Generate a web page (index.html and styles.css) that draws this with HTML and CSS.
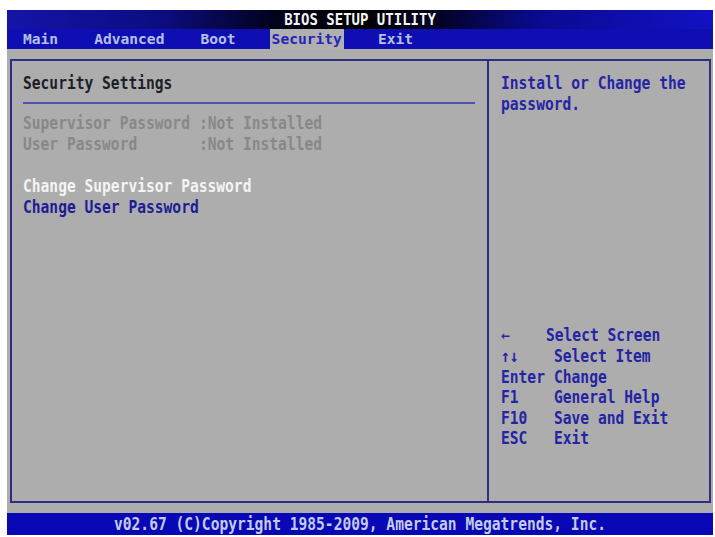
FILE: index.html
```html
<!DOCTYPE html>
<html>
<head>
<meta charset="utf-8">
<link rel="stylesheet" href="styles.css">
</head>
<body>
<div class="screen">
  <div class="titlebar"><div class="tall">BIOS SETUP UTILITY</div></div>
  <div class="menubar">
    <span class="tab">Main</span>
    <span class="tab">Advanced</span>
    <span class="tab">Boot</span>
    <span class="tab active">Security</span>
    <span class="tab">Exit</span>
  </div>
  <div class="body">
    <div class="frame">
      <div class="left">
        <div class="heading tall">Security Settings</div>
        <div class="rule"></div>
        <div class="row disabled tall"><span class="label">Supervisor Password</span><span>:Not Installed</span></div>
        <div class="row disabled tall"><span class="label">User Password</span><span>:Not Installed</span></div>
        <div class="row blank"></div>
        <div class="row selected tall">Change Supervisor Password</div>
        <div class="row item tall">Change User Password</div>
      </div>
      <div class="right">
        <div class="help tall">Install or Change the</div>
        <div class="help tall">password.</div>
        <div class="keys">
          <div class="key tall"><span class="k k1">&larr;</span><span>Select Screen</span></div>
          <div class="key tall"><span class="k">&uarr;&darr;</span><span>Select Item</span></div>
          <div class="key tall"><span class="k">Enter</span><span>Change</span></div>
          <div class="key tall"><span class="k">F1</span><span>General Help</span></div>
          <div class="key tall"><span class="k">F10</span><span>Save and Exit</span></div>
          <div class="key tall"><span class="k">ESC</span><span>Exit</span></div>
        </div>
      </div>
    </div>
  </div>
  <div class="footer"><div class="tall">v02.67 (C)Copyright 1985-2009, American Megatrends, Inc.</div></div>
</div>
</body>
</html>
```

FILE: styles.css
```css
html, body {
  margin: 0;
  padding: 0;
  background: #ffffff;
}
body {
  font-family: "DejaVu Sans Mono", "Liberation Mono", monospace;
  font-weight: bold;
  font-size: 14.6px;
}
.tall {
  transform: scaleY(1.18);
  transform-origin: 50% 55%;
}
.screen {
  margin: 10px 2px 0 7px;
  width: 706px;
  height: 525px;
  display: flex;
  flex-direction: column;
}
.titlebar {
  height: 19px;
  line-height: 19px;
  text-align: center;
  color: #f4f4f4;
  font-size: 14px;
  background: linear-gradient(to right, #1414a8 0%, #0c0c80 22%, #02021c 38%, #000 50%, #03032a 62%, #0a0a90 75%, #1212c4 100%);
}
.menubar {
  height: 20px;
  background: #0e0eb2;
  display: flex;
  gap: 32px;
  padding-left: 14px;
}
.tab {
  display: inline-block;
  padding: 0 2px;
  line-height: 20px;
  color: #b4c0e4;
}
.tab.active {
  background: #b0b0b0;
  color: #2424b8;
}
.body {
  flex: 1;
  background: #adadad;
  padding: 10px 2px 10px 3px;
  display: flex;
}
.frame {
  flex: 1;
  display: flex;
  border: 2px solid #2e2e80;
}
.left {
  width: 477px;
  border-right: 2px solid #2e2e80;
  padding: 11px 0 0 11px;
  box-sizing: border-box;
  line-height: 21px;
}
.heading {
  color: #1e1e2a;
}
.rule {
  height: 2px;
  width: 452px;
  background: #5050b0;
  margin: 9px 0 8px;
}
.row {
  height: 21px;
  white-space: nowrap;
}
.label {
  display: inline-block;
  width: 176px;
}
.disabled {
  color: #888888;
}
.selected {
  color: #f4f4f4;
}
.item {
  color: #1c1c94;
}
.right {
  flex: 1;
  padding: 11px 0 52px 12px;
  display: flex;
  flex-direction: column;
  color: #2424a4;
  line-height: 21px;
}
.keys {
  margin-top: auto;
  line-height: 20.6px;
}
.key {
  display: flex;
  white-space: nowrap;
}
.k {
  width: 53px;
}
.k1 {
  width: 45px;
  font-weight: normal;
}
.footer {
  height: 22px;
  line-height: 22px;
  background: #0808b6;
  color: #c4cbe8;
  text-align: center;
  font-size: 14.6px;
}
```
